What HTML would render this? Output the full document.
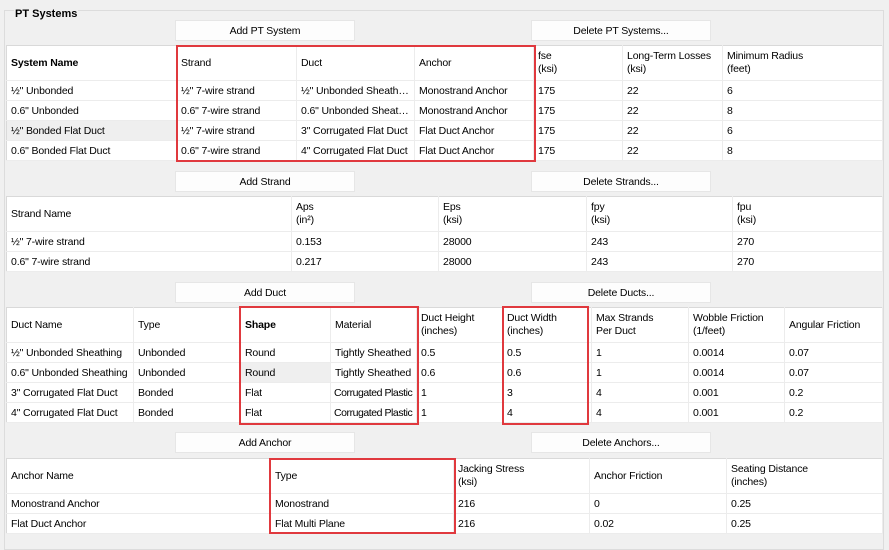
<!DOCTYPE html>
<html><head><meta charset="utf-8"><style>
*{margin:0;padding:0;box-sizing:border-box}
body{width:889px;height:543px;background:#f0f0f0;font-family:"Liberation Sans",Tahoma,sans-serif;font-size:10.5px;letter-spacing:-0.15px;color:#000;position:relative;overflow:hidden}
.gb{position:absolute;left:4px;top:10px;width:880px;height:540px;border:1px solid #dcdcdc}
.ttl{position:absolute;left:14px;top:8px;font-weight:bold;background:#f0f0f0;padding:0 1px;font-size:11px;letter-spacing:0}
.btn{position:absolute;width:180px;height:21px;background:#fdfdfd;border:1px solid #e6e6e6;text-align:center;line-height:21px}
table{position:absolute;left:6px;width:877px;border-collapse:collapse;table-layout:fixed;background:#fff;border:1px solid #d9d9d9}
td{height:20px;padding:0 3px 0 4px;border-right:1px solid #ececec;border-bottom:1px solid #ececec;white-space:nowrap;overflow:hidden;text-overflow:ellipsis;vertical-align:middle}
tr.h td{height:35px;line-height:13px}
.b{font-weight:bold}
.g{background:#efefef}
.n{letter-spacing:-0.45px;padding-left:3px}
.red{position:absolute;border:2px solid #e0393e}
</style></head><body>
<div class="gb"></div>
<div class="ttl">PT Systems</div>

<div class="btn" style="left:175px;top:20px">Add PT System</div>
<div class="btn" style="left:531px;top:20px">Delete PT Systems...</div>
<table style="top:45px">
<colgroup><col style="width:170px"><col style="width:120px"><col style="width:118px"><col style="width:119px"><col style="width:89px"><col style="width:100px"><col></colgroup>
<tr class="h"><td class="b">System Name</td><td>Strand</td><td>Duct</td><td>Anchor</td><td>fse<br>(ksi)</td><td>Long-Term Losses<br>(ksi)</td><td>Minimum Radius<br>(feet)</td></tr>
<tr><td>½" Unbonded</td><td>½" 7-wire strand</td><td>½" Unbonded Sheathing</td><td>Monostrand Anchor</td><td>175</td><td>22</td><td>6</td></tr>
<tr><td>0.6" Unbonded</td><td>0.6" 7-wire strand</td><td>0.6" Unbonded Sheathi...</td><td>Monostrand Anchor</td><td>175</td><td>22</td><td>8</td></tr>
<tr><td class="g">½" Bonded Flat Duct</td><td>½" 7-wire strand</td><td>3" Corrugated Flat Duct</td><td>Flat Duct Anchor</td><td>175</td><td>22</td><td>6</td></tr>
<tr><td>0.6" Bonded Flat Duct</td><td>0.6" 7-wire strand</td><td>4" Corrugated Flat Duct</td><td>Flat Duct Anchor</td><td>175</td><td>22</td><td>8</td></tr>
</table>
<div class="red" style="left:176px;top:45px;width:360px;height:117px"></div>

<div class="btn" style="left:175px;top:171px">Add Strand</div>
<div class="btn" style="left:531px;top:171px">Delete Strands...</div>
<table style="top:196px">
<colgroup><col style="width:285px"><col style="width:147px"><col style="width:148px"><col style="width:146px"><col></colgroup>
<tr class="h"><td>Strand Name</td><td>Aps<br>(in²)</td><td>Eps<br>(ksi)</td><td>fpy<br>(ksi)</td><td>fpu<br>(ksi)</td></tr>
<tr><td>½" 7-wire strand</td><td>0.153</td><td>28000</td><td>243</td><td>270</td></tr>
<tr><td>0.6" 7-wire strand</td><td>0.217</td><td>28000</td><td>243</td><td>270</td></tr>
</table>

<div class="btn" style="left:175px;top:282px">Add Duct</div>
<div class="btn" style="left:531px;top:282px">Delete Ducts...</div>
<table style="top:307px">
<colgroup><col style="width:127px"><col style="width:107px"><col style="width:90px"><col style="width:86px"><col style="width:86px"><col style="width:89px"><col style="width:97px"><col style="width:96px"><col></colgroup>
<tr class="h"><td>Duct Name</td><td>Type</td><td class="b">Shape</td><td>Material</td><td>Duct Height<br>(inches)</td><td>Duct Width<br>(inches)</td><td>Max Strands<br>Per Duct</td><td>Wobble Friction<br>(1/feet)</td><td>Angular Friction</td></tr>
<tr><td>½" Unbonded Sheathing</td><td>Unbonded</td><td>Round</td><td>Tightly Sheathed</td><td>0.5</td><td>0.5</td><td>1</td><td>0.0014</td><td>0.07</td></tr>
<tr><td>0.6" Unbonded Sheathing</td><td>Unbonded</td><td class="g">Round</td><td>Tightly Sheathed</td><td>0.6</td><td>0.6</td><td>1</td><td>0.0014</td><td>0.07</td></tr>
<tr><td>3" Corrugated Flat Duct</td><td>Bonded</td><td>Flat</td><td class="n">Corrugated Plastic</td><td>1</td><td>3</td><td>4</td><td>0.001</td><td>0.2</td></tr>
<tr><td>4" Corrugated Flat Duct</td><td>Bonded</td><td>Flat</td><td class="n">Corrugated Plastic</td><td>1</td><td>4</td><td>4</td><td>0.001</td><td>0.2</td></tr>
</table>
<div class="red" style="left:239px;top:306px;width:180px;height:119px"></div>
<div class="red" style="left:502px;top:306px;width:87px;height:119px"></div>

<div class="btn" style="left:175px;top:432px">Add Anchor</div>
<div class="btn" style="left:531px;top:432px">Delete Anchors...</div>
<table style="top:458px">
<colgroup><col style="width:264px"><col style="width:183px"><col style="width:136px"><col style="width:137px"><col></colgroup>
<tr class="h"><td>Anchor Name</td><td>Type</td><td>Jacking Stress<br>(ksi)</td><td>Anchor Friction</td><td>Seating Distance<br>(inches)</td></tr>
<tr><td>Monostrand Anchor</td><td>Monostrand</td><td>216</td><td>0</td><td>0.25</td></tr>
<tr><td>Flat Duct Anchor</td><td>Flat Multi Plane</td><td>216</td><td>0.02</td><td>0.25</td></tr>
</table>
<div class="red" style="left:269px;top:458px;width:187px;height:76px"></div>
</body></html>
